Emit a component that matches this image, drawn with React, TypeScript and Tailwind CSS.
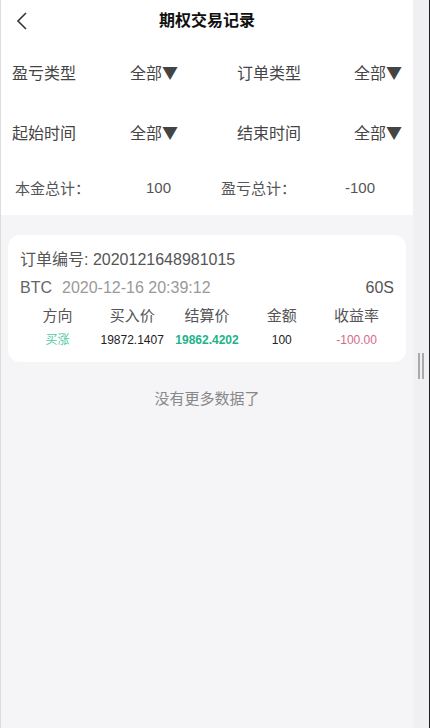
import React from 'react'

const font = { fontFamily: '"Liberation Sans", "Noto Sans CJK SC", sans-serif' }
const cjk = { fontFamily: '"Noto Sans CJK SC", sans-serif' }

const filters = [
  ['盈亏类型', '订单类型'],
  ['起始时间', '结束时间'],
]

const columns = [
  { label: '方向', value: '买涨', cls: 'text-[#4fcaa2]' },
  { label: '买入价', value: '19872.1407', cls: 'text-[#222]' },
  { label: '结算价', value: '19862.4202', cls: 'text-[#22b38a] font-semibold' },
  { label: '金额', value: '100', cls: 'text-[#222]' },
  { label: '收益率', value: '-100.00', cls: 'text-[#d26a86]' },
]

function Select() {
  return <span className="text-[16px] text-[#444]">全部▼</span>
}

export default function App() {
  return (
    <div className="flex w-[430px] h-[728px] bg-[#f5f4f7] overflow-hidden" style={font}>
      <div className="flex flex-col w-[413px] border-l border-[#ddd]">
        {/* Header + filters */}
        <div className="bg-white">
          <div className="relative flex items-center justify-center h-[42px]">
            <svg className="absolute left-[14px] top-[12px]" width="14" height="18" viewBox="0 0 14 18">
              <path d="M11 1 L3 9 L11 17" fill="none" stroke="#333" strokeWidth="1.6" />
            </svg>
            <span className="text-[16px] font-bold text-[#111]">期权交易记录</span>
          </div>

          {filters.map(([a, b], i) => (
            <div key={i} className="flex items-center h-[60px] leading-[24px]" style={cjk}>
              <div className="flex items-center justify-between w-[166px] ml-[11px]">
                <span className="text-[16px] text-[#444]">{a}</span>
                <Select />
              </div>
              <div className="flex items-center justify-between w-[165px] ml-[59px]">
                <span className="text-[16px] text-[#444]">{b}</span>
                <Select />
              </div>
            </div>
          ))}

          <div className="flex items-center h-[53px] text-[15px] text-[#555]">
            <span className="ml-[14px] w-[131px]" style={cjk}>本金总计：</span>
            <span className="w-[75px]">100</span>
            <span className="w-[124px]" style={cjk}>盈亏总计：</span>
            <span>-100</span>
          </div>
        </div>

        {/* Order card */}
        <div className="mx-[7px] mt-[20px] bg-white rounded-[12px] px-[12px] pt-[14px] pb-[12px]">
          <div className="text-[16px] text-[#555] leading-[22px]">订单编号: 2020121648981015</div>
          <div className="flex items-center justify-between mt-[6px] leading-[22px] text-[16px]">
            <div>
              <span className="text-[#666]">BTC</span>
              <span className="ml-[10px] text-[#999]">2020-12-16 20:39:12</span>
            </div>
            <span className="text-[#555]">60S</span>
          </div>
          <div className="grid grid-cols-5 mt-[6px]">
            {columns.map((c) => (
              <div key={c.label} className="flex flex-col items-center">
                <span className="text-[15px] text-[#555] leading-[22px]">{c.label}</span>
                <span className={`text-[12px] leading-[20px] mt-[3px] ${c.cls}`}>{c.value}</span>
              </div>
            ))}
          </div>
        </div>

        <div className="mt-[26px] text-center text-[15px] text-[#888]">没有更多数据了</div>
      </div>

      {/* Scrollbar strip */}
      <div className="w-[17px] bg-[#f0eff2] border-r border-[#222] flex justify-center pt-[353px]">
        <div className="flex gap-[2px] h-[26px]">
          <div className="w-[2px] h-full bg-[#aaa]" />
          <div className="w-[2px] h-full bg-[#aaa]" />
        </div>
      </div>
    </div>
  )
}
